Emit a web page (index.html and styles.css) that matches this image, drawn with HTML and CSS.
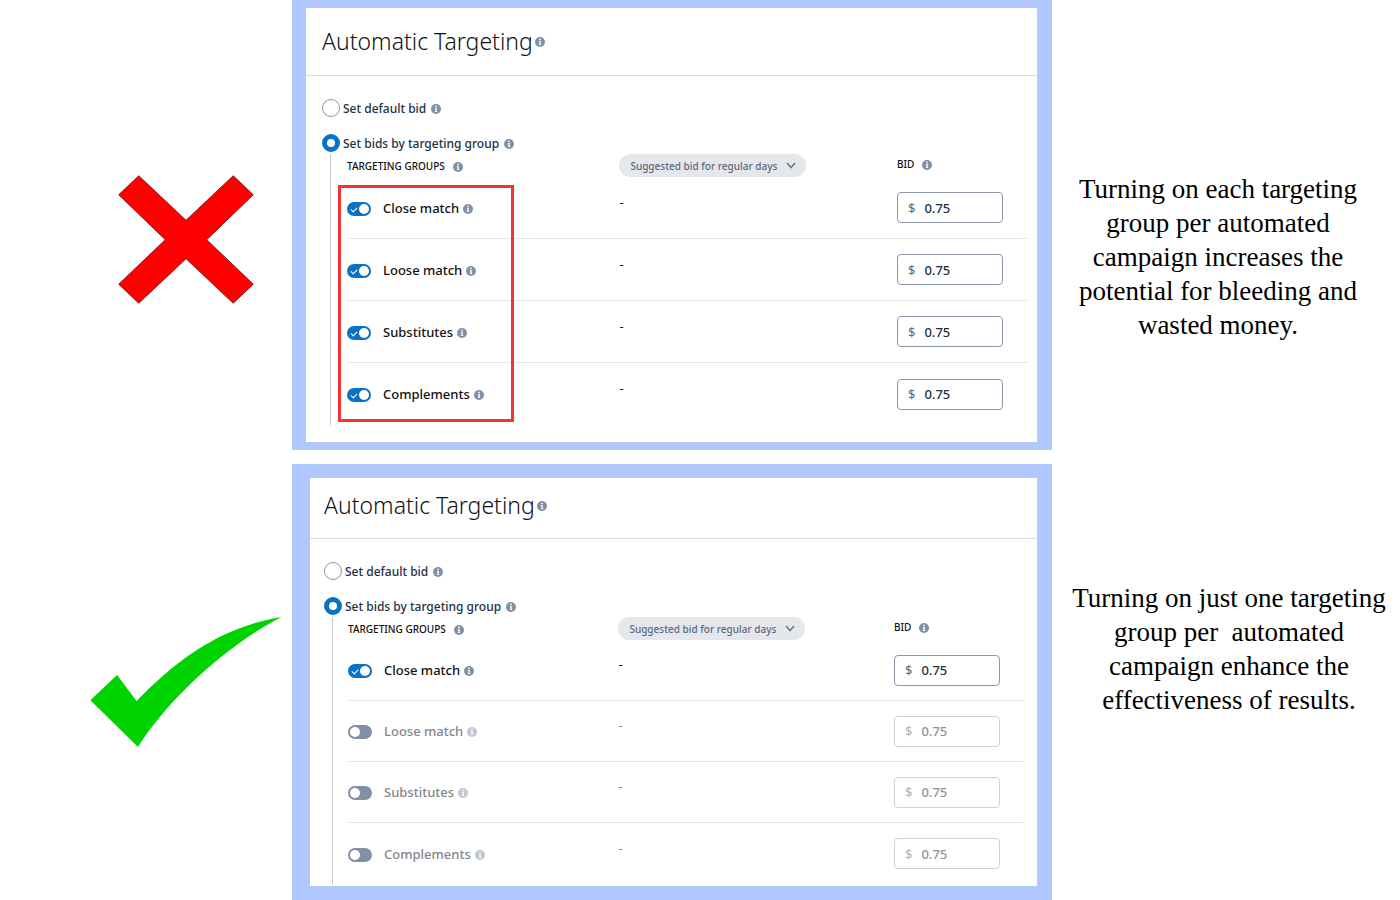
FILE: index.html
```html
<!DOCTYPE html>
<html lang="en">
<head>
  <meta charset="UTF-8" />
  <meta name="viewport" content="width=device-width, initial-scale=1.0"/>
  <title>Automatic Targeting</title>
  <link rel="stylesheet" href="styles.css">
</head>
<body>
  <!-- shared icons -->
  <svg class="defs" width="0" height="0" aria-hidden="true">
    <symbol id="info" viewBox="0 0 20 20">
      <circle cx="10" cy="10" r="10" fill="currentColor"/>
      <circle cx="10" cy="4.8" r="1.7" fill="#fff"/>
      <path d="M7.8 8h3.7v6.4h1v1.4H7.8v-1.4h1V9.4h-1z" fill="#fff"/>
    </symbol>
    <symbol id="chevron" viewBox="0 0 10 7">
      <path d="M1 1l4 4.5L9 1" fill="none" stroke="currentColor" stroke-width="1.5"/>
    </symbol>
  </svg>

  <main class="compare">
    <div class="mark mark-bad">
      <svg width="136" height="129" viewBox="117 46 406 385" role="img" aria-label="Wrong">
        <path d="M119 105L179 48L320 181L461 48L521 105L382 239L521 372L461 429L320 296L179 429L119 372L258 239Z" fill="#f00" stroke="#400" stroke-width="2"/>
      </svg>
    </div>

    <section class="panel panel-all">
      <div class="card">
        <header class="card-head">
          <h2>Automatic Targeting</h2>
          <svg class="info"><use href="#info"/></svg>
        </header>
        <div class="card-body">
          <div class="option">
            <input type="radio" name="bid-a" id="a-default">
            <label for="a-default">Set default bid</label>
            <svg class="info"><use href="#info"/></svg>
          </div>
          <div class="option">
            <input type="radio" name="bid-a" id="a-group" checked>
            <label for="a-group">Set bids by targeting group</label>
            <svg class="info"><use href="#info"/></svg>
          </div>
          <div class="groups">
            <table>
              <thead>
                <tr>
                  <th class="col-group"><span class="head head-group">TARGETING GROUPS <svg class="info"><use href="#info"/></svg></span></th>
                  <th class="col-suggested">
                    <span class="pill">
                      <select aria-label="Suggested bid"><option>Suggested bid for regular days</option></select>
                      <svg class="chevron"><use href="#chevron"/></svg>
                    </span>
                  </th>
                  <th class="col-bid"><span class="head">BID <svg class="info"><use href="#info"/></svg></span></th>
                </tr>
              </thead>
              <tbody>
                <tr>
                  <td><div class="group"><input type="checkbox" id="a-close" checked><label for="a-close">Close match</label><svg class="info"><use href="#info"/></svg></div></td>
                  <td class="suggested">-</td>
                  <td><label class="money"><span>$</span><input type="text" value="0.75" aria-label="Close match bid"></label></td>
                </tr>
                <tr>
                  <td><div class="group"><input type="checkbox" id="a-loose" checked><label for="a-loose">Loose match</label><svg class="info"><use href="#info"/></svg></div></td>
                  <td class="suggested">-</td>
                  <td><label class="money"><span>$</span><input type="text" value="0.75" aria-label="Loose match bid"></label></td>
                </tr>
                <tr>
                  <td><div class="group"><input type="checkbox" id="a-sub" checked><label for="a-sub">Substitutes</label><svg class="info"><use href="#info"/></svg></div></td>
                  <td class="suggested">-</td>
                  <td><label class="money"><span>$</span><input type="text" value="0.75" aria-label="Substitutes bid"></label></td>
                </tr>
                <tr>
                  <td><div class="group"><input type="checkbox" id="a-comp" checked><label for="a-comp">Complements</label><svg class="info"><use href="#info"/></svg></div></td>
                  <td class="suggested">-</td>
                  <td><label class="money"><span>$</span><input type="text" value="0.75" aria-label="Complements bid"></label></td>
                </tr>
              </tbody>
            </table>
            <div class="highlight"></div>
          </div>
        </div>
      </div>
    </section>

    <p class="note note-bad">Turning on each targeting<br>group per automated<br>campaign increases the<br>potential for bleeding and<br>wasted money.</p>

    <div class="mark mark-good">
      <svg width="192" height="130" viewBox="31 51 576 390" role="img" aria-label="Right">
        <path d="M32 301L112 225L171 303C300 170 430 80 606 51C450 130 270 290 175 441Z" fill="#00d400"/>
      </svg>
    </div>

    <section class="panel panel-one">
      <div class="card">
        <header class="card-head">
          <h2>Automatic Targeting</h2>
          <svg class="info"><use href="#info"/></svg>
        </header>
        <div class="card-body">
          <div class="option">
            <input type="radio" name="bid-b" id="b-default">
            <label for="b-default">Set default bid</label>
            <svg class="info"><use href="#info"/></svg>
          </div>
          <div class="option">
            <input type="radio" name="bid-b" id="b-group" checked>
            <label for="b-group">Set bids by targeting group</label>
            <svg class="info"><use href="#info"/></svg>
          </div>
          <div class="groups">
            <table>
              <thead>
                <tr>
                  <th class="col-group"><span class="head head-group">TARGETING GROUPS <svg class="info"><use href="#info"/></svg></span></th>
                  <th class="col-suggested">
                    <span class="pill">
                      <select aria-label="Suggested bid"><option>Suggested bid for regular days</option></select>
                      <svg class="chevron"><use href="#chevron"/></svg>
                    </span>
                  </th>
                  <th class="col-bid"><span class="head">BID <svg class="info"><use href="#info"/></svg></span></th>
                </tr>
              </thead>
              <tbody>
                <tr>
                  <td><div class="group"><input type="checkbox" id="b-close" checked><label for="b-close">Close match</label><svg class="info"><use href="#info"/></svg></div></td>
                  <td class="suggested">-</td>
                  <td><label class="money"><span>$</span><input type="text" value="0.75" aria-label="Close match bid"></label></td>
                </tr>
                <tr class="off">
                  <td><div class="group"><input type="checkbox" id="b-loose"><label for="b-loose">Loose match</label><svg class="info"><use href="#info"/></svg></div></td>
                  <td class="suggested">-</td>
                  <td><label class="money"><span>$</span><input type="text" value="0.75" aria-label="Loose match bid" disabled></label></td>
                </tr>
                <tr class="off">
                  <td><div class="group"><input type="checkbox" id="b-sub"><label for="b-sub">Substitutes</label><svg class="info"><use href="#info"/></svg></div></td>
                  <td class="suggested">-</td>
                  <td><label class="money"><span>$</span><input type="text" value="0.75" aria-label="Substitutes bid" disabled></label></td>
                </tr>
                <tr class="off">
                  <td><div class="group"><input type="checkbox" id="b-comp"><label for="b-comp">Complements</label><svg class="info"><use href="#info"/></svg></div></td>
                  <td class="suggested">-</td>
                  <td><label class="money"><span>$</span><input type="text" value="0.75" aria-label="Complements bid" disabled></label></td>
                </tr>
              </tbody>
            </table>
          </div>
        </div>
      </div>
    </section>

    <p class="note note-good">Turning on just one targeting<br>group per&nbsp; automated<br>campaign enhance the<br>effectiveness of results.</p>
  </main>
</body>
</html>
```
FILE: styles.css
```css
* {
  box-sizing: border-box;
}
body {
  margin: 0;
  background-color: #fff;
  color: #111;
  font-family: "Noto Sans", "Open Sans", sans-serif;
  font-size: 13px;
}
.defs {
  position: absolute;
}
.compare {
  display: grid;
  grid-template-columns: 292fr 760fr 348fr;
  row-gap: 14px;
}

/* cross and tick */
.mark {
  display: flex;
  align-items: center;
  justify-content: flex-end;
}
.mark-bad {
  padding: 29px 38px 0 0;
}
.mark-good {
  padding-right: 10px;
}

/* side text */
.note {
  margin: 0;
  align-self: center;
  text-align: center;
  font-family: "Liberation Serif", serif;
  font-size: 27px;
  line-height: 34px;
  color: #000;
  white-space: nowrap;
}
.note-bad {
  padding: 64px 16px 0 0;
}
.note-good {
  padding: 0 0 67px 6px;
}

/* panels */
.panel {
  background-color: #b1c8ff;
}
.panel-all {
  padding: 8px 15px 8px 14px;
}
.panel-one {
  padding: 14px 15px 14px 18px;
}
.card {
  background-color: #fff;
}
.card-head {
  display: flex;
  align-items: center;
  gap: 2px;
  padding: 17px 16px 18px;
  border-bottom: 1px solid #d9dbdd;
}
.panel-one .card-head {
  padding: 11px 14px 17px;
}
.card-head h2 {
  margin: 0;
  font-size: 23px;
  font-weight: 300;
  line-height: 32px;
}
.info {
  width: 10px;
  height: 10px;
  flex: none;
  color: #8290a6;
}
.card-head .info {
  margin-top: 2px;
}
.card-body {
  padding: 23px 9px 17px 16px;
}
.panel-one .card-body {
  padding: 23px 13px 2px 14px;
}

/* radio options */
.option {
  display: flex;
  align-items: center;
  height: 18px;
  margin-bottom: 17px;
  color: #232f3e;
  font-size: 12px;
  font-weight: 500;
}
.option + .option {
  margin-bottom: 2px;
}
.option label {
  margin: 0 5px 0 3px;
}
.option .info {
  margin-top: 2px;
}
.option input {
  appearance: none;
  width: 18px;
  height: 18px;
  margin: 0;
  border: 1px solid #8d96ab;
  border-radius: 50%;
  background-color: #fff;
}
.option input:checked {
  border: 5px solid #0972c4;
}

/* targeting groups table */
.groups {
  position: relative;
  margin-left: 8px;
  padding-left: 16px;
  border-left: 1px solid #c6c8cb;
}
.panel-one .groups {
  padding-left: 15px;
}
table {
  width: 100%;
  table-layout: fixed;
  border-spacing: 0;
}
th, td {
  padding: 0;
  text-align: left;
}
th {
  height: 23px;
  font-weight: 500;
  vertical-align: top;
}
td {
  height: 62px;
  border-bottom: 1px solid #e6e7e9;
}
.panel-one td {
  height: 61px;
}
tr:last-child td {
  border-bottom: 0;
}
.col-group {
  width: 40%;
}
.col-bid {
  width: 131px;
}
.panel-one .col-bid {
  width: 130px;
}
.head {
  display: flex;
  align-items: center;
  gap: 8px;
  font-size: 10px;
  line-height: 21px;
}
.head-group {
  padding-top: 2px;
}
.pill {
  position: relative;
  display: flex;
  width: 187px;
}
.pill select {
  appearance: none;
  width: 100%;
  height: 23px;
  padding: 0 26px 0 11px;
  border: 0;
  border-radius: 12px;
  background-color: #e5e7ec;
  color: #5c6a80;
  font-family: inherit;
  font-size: 10px;
  font-weight: 500;
}
.chevron {
  position: absolute;
  top: 8px;
  right: 10px;
  width: 10px;
  height: 7px;
  color: #68768c;
}

/* toggles */
.group {
  display: flex;
  align-items: center;
  font-weight: 500;
}
.group label {
  margin: 0 4px 0 12px;
}
.group .info {
  margin-top: 2px;
}
.group input {
  appearance: none;
  position: relative;
  width: 24px;
  height: 14px;
  margin: 2px 0 0;
  border-radius: 7px;
  background-color: #8290a6;
}
.group input::before {
  content: "";
  position: absolute;
  top: 2px;
  left: 2px;
  width: 10px;
  height: 10px;
  border-radius: 50%;
  background-color: #fff;
}
.group input:checked {
  background-color: #0972c4;
}
.group input:checked::before {
  left: 12px;
}
.group input:checked::after {
  content: "";
  position: absolute;
  top: 5px;
  left: 4px;
  width: 5px;
  height: 3px;
  border-left: 1px solid #fff;
  border-bottom: 1px solid #fff;
  transform: rotate(-45deg);
}
.suggested {
  padding-bottom: 12px;
}

/* bid field */
.money {
  display: flex;
  align-items: center;
  width: 106px;
  height: 31px;
  padding: 0 10px;
  border: 1px solid #8d96ab;
  border-radius: 4px;
  color: #5c6a80;
}
.money input {
  width: 100%;
  margin: 0;
  padding: 0 0 0 9px;
  border: 0;
  background: none;
  color: #232f3e;
  font-family: inherit;
  font-size: 13px;
  font-weight: 500;
}

/* rows switched off */
.off {
  color: #848688;
}
.off .info {
  color: #c0c6d2;
}
.off .money {
  border-color: #cdd1da;
  color: #adb4c0;
}
.off .money input {
  color: #8e939b;
}

/* red frame over the toggles */
.highlight {
  position: absolute;
  top: 31px;
  left: 7px;
  width: 176px;
  height: 237px;
  border: 3px solid #f03538;
}
```
